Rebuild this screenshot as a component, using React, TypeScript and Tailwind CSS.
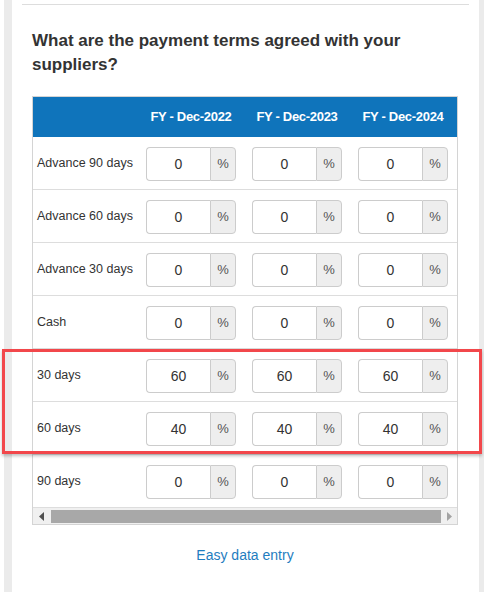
import React from 'react';

const years = ['FY - Dec-2022', 'FY - Dec-2023', 'FY - Dec-2024'];

const rows: Array<{ label: string; values: number[] }> = [
  { label: 'Advance 90 days', values: [0, 0, 0] },
  { label: 'Advance 60 days', values: [0, 0, 0] },
  { label: 'Advance 30 days', values: [0, 0, 0] },
  { label: 'Cash', values: [0, 0, 0] },
  { label: '30 days', values: [60, 60, 60] },
  { label: '60 days', values: [40, 40, 40] },
  { label: '90 days', values: [0, 0, 0] },
];

function PercentInput({ value }: { value: number }) {
  return (
    <div className="flex h-[34px] w-[90px] shrink-0">
      <input
        type="text"
        defaultValue={String(value)}
        className="h-full w-[64px] rounded-l-[4px] border border-r-0 border-[#cccccc] bg-white text-center text-[14px] text-[#333] outline-none"
      />
      <div className="flex h-full w-[26px] items-center justify-center rounded-r-[4px] border border-[#cccccc] bg-[#eeeeee] text-[13px] text-[#555]">
        %
      </div>
    </div>
  );
}

export default function App() {
  return (
    <div className="relative flex h-[592px] w-full overflow-hidden bg-white font-['Liberation_Sans',Arial,sans-serif]">
      <div className="w-[4px] shrink-0 bg-white" />
      <div className="w-[8px] shrink-0 bg-[#ebebeb]" />

      {/* card */}
      <div className="min-w-0 flex-1 bg-white px-[10px]">
        <div className="mt-[4px] border-t border-[#dddddd]" />

        <div className="pl-[10px] pr-[11px]">
          <h2 className="mt-[24px] mb-[19px] text-[17px] font-bold leading-[24px] text-[#333]">
            What are the payment terms agreed with your suppliers?
          </h2>

          {/* scroll container */}
          <div className="border border-[#d4d4d4]">
            <div className="w-full overflow-hidden">
              <div className="w-[433px]">
                <div className="flex h-[39px] items-center bg-[#0f74bb] text-white">
                  <div className="w-[105px] shrink-0" />
                  {years.map((y, i) => (
                    <div
                      key={y}
                      className={`${i === 2 ? 'w-[115px] pr-[9px]' : 'w-[106px]'} flex shrink-0 justify-center text-[13px] font-bold tracking-[-0.3px]`}
                    >
                      {y}
                    </div>
                  ))}
                </div>

                {rows.map((r, idx) => (
                  <div
                    key={r.label}
                    className={`flex h-[53px] ${idx === 0 ? 'border-t border-[#0f74bb]' : 'border-t border-[#dddddd]'}`}
                  >
                    <div className="flex w-[105px] shrink-0 items-center pl-[4px] text-[12.5px] text-[#333]">
                      {r.label}
                    </div>
                    {r.values.map((v, i) => (
                      <div
                        key={i}
                        className={`${i === 2 ? 'w-[115px] pr-[9px]' : 'w-[106px]'} flex shrink-0 justify-center pt-[10px]`}
                      >
                        <PercentInput value={v} />
                      </div>
                    ))}
                  </div>
                ))}
              </div>
            </div>

            {/* horizontal scrollbar */}
            <div className="flex h-[17px] items-center border-t border-[#dddddd] bg-[#f0f0f0]">
              <div className="flex w-[17px] items-center justify-center">
                <svg width="6" height="9" viewBox="0 0 6 9">
                  <path d="M5 0 L0 4.5 L5 9 Z" fill="#505050" />
                </svg>
              </div>
              <div className="ml-[1px] h-[13px] flex-1 bg-[#a8a8a8]" />
              <div className="flex w-[16px] items-center justify-center">
                <svg width="6" height="9" viewBox="0 0 6 9">
                  <path d="M1 0 L6 4.5 L1 9 Z" fill="#a3a3a3" />
                </svg>
              </div>
            </div>
          </div>

          <div className="mt-[20px] text-center text-[14px] leading-[20px] text-[#1f7dc0]">
            Easy data entry
          </div>
        </div>
      </div>

      <div className="w-[5px] shrink-0 bg-[#ebebeb]" />

      {/* highlight annotation */}
      <div className="pointer-events-none absolute left-[2px] top-[349px] h-[105px] w-[480px] border-[3px] border-[#f2474b] shadow-[0_2px_3px_rgba(0,0,0,0.25)]" />
    </div>
  );
}
